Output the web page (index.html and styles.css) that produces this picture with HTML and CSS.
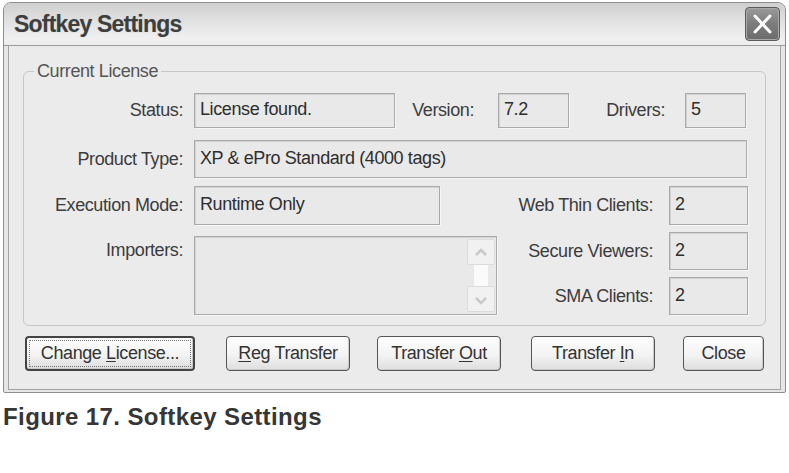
FILE: index.html
```html
<!DOCTYPE html>
<html lang="en">
<head>
	<meta charset="UTF-8">
	<title>Softkey Settings</title>
	<link rel="stylesheet" href="styles.css">
</head>
<body>
<div class="window">
	<div class="titlebar">
		<span class="title">Softkey Settings</span>
		<span class="close-x">
			<svg width="35" height="34" viewBox="0 0 35 34">
				<path d="M10 9 L25 25 M25 9 L10 25" stroke="#fff" stroke-width="3" stroke-linecap="round"/>
			</svg>
		</span>
	</div>
	<div class="client">
		<fieldset class="group">
			<legend>Current License</legend>
			<div class="row row1">
				<span class="lbl">Status:</span>
				<div class="box w-status">License found.</div>
				<span class="lbl-version">Version:</span>
				<div class="box w-ver">7.2</div>
				<span class="lbl-drivers">Drivers:</span>
				<div class="box w-drv">5</div>
			</div>
			<div class="row row2">
				<span class="lbl">Product Type:</span>
				<div class="box w-prod">XP &amp; ePro Standard (4000 tags)</div>
			</div>
			<div class="row row3">
				<span class="lbl">Execution Mode:</span>
				<div class="box w-mode">Runtime Only</div>
				<span class="lbl-right">Web Thin Clients:</span>
				<div class="box w-small">2</div>
			</div>
			<div class="row row4">
				<span class="lbl lbl-imp">Importers:</span>
				<div class="box list">
					<div class="scroll">
						<span class="sbtn">
							<svg width="26" height="26" viewBox="0 0 26 26"><path d="M8 15 L13 10 L18 15" fill="none" stroke="#c9c9c9" stroke-width="2.5"/></svg>
						</span>
						<span class="thumb"></span>
						<span class="sbtn">
							<svg width="26" height="26" viewBox="0 0 26 26"><path d="M8 11 L13 16 L18 11" fill="none" stroke="#c9c9c9" stroke-width="2.5"/></svg>
						</span>
					</div>
				</div>
				<div class="side">
					<div class="side-row">
						<span class="lbl-side">Secure Viewers:</span>
						<div class="box w-small">2</div>
					</div>
					<div class="side-row">
						<span class="lbl-side">SMA Clients:</span>
						<div class="box w-small">2</div>
					</div>
				</div>
			</div>
		</fieldset>
		<div class="buttons">
			<button class="btn btn-default w-change">Change <u>L</u>icense...</button>
			<button class="btn w-reg"><u>R</u>eg Transfer</button>
			<button class="btn w-out">Transfer <u>O</u>ut</button>
			<button class="btn w-in">Transfer <u>I</u>n</button>
			<button class="btn w-close">Close</button>
		</div>
	</div>
</div>
<p class="caption">Figure 17. Softkey Settings</p>
</body>
</html>
```

FILE: styles.css
```css
*{margin: 0;padding: 0;box-sizing: border-box}
body{
	background: #fff;
	font-family: "Liberation Sans", Arial, sans-serif;
	color: #3c3c3c;
}
.window{
	width: 783px;
	height: 391px;
	margin: 2px 0 0 3px;
	border: 1px solid #8e8e8e;
	border-radius: 8px 8px 2px 2px;
	background: #e6e6e6;
	display: flex;
	flex-direction: column;
}
.titlebar{
	height: 43px;
	flex: none;
	display: flex;
	align-items: center;
	justify-content: space-between;
	padding: 0 5px 0 10px;
	border-bottom: 1px solid #9c9c9c;
	border-radius: 7px 7px 0 0;
	background: linear-gradient(#cfcfcf, #dedede 35%, #f0f0f0 85%, #ececec);
}
.title{
	font: bold 23px/26px "Liberation Sans", Arial, sans-serif;
	letter-spacing: -0.8px;
	color: #3e3e3e;
	text-shadow: 0 0 1px #bbb;
}
.close-x{
	width: 35px;
	height: 34px;
	display: block;
	border: 1px solid #5a5a5a;
	border-radius: 4px;
	background: linear-gradient(#9a9a9a, #7c7c7c 50%, #6c6c6c);
	box-shadow: inset 0 0 0 1px #a9a9a9;
}
.close-x svg{display: block;margin: -1px}
.client{
	flex: 1;
	margin: 0 4px 2px;
	border: 1px solid #a3a3a3;
	border-top: none;
	background: #ebebeb;
	font-size: 18px;
	letter-spacing: -0.4px;
}
.group{
	margin: 16px 0 0 14px;
	width: 743px;
	border: 1px solid #c7c7c7;
	border-radius: 6px;
	padding: 13px 0 10px 0;
}
.group legend{
	margin-left: 10px;
	padding: 0 3px;
	line-height: 18px;
	color: #555;
}
.row{
	display: flex;
	align-items: center;
}
.row1{height: 35px;margin-bottom: 12px}
.row2{height: 38px;margin-bottom: 8px}
.row3{height: 39px;margin-bottom: 7px}
.row4{height: 83px;align-items: flex-start}
.lbl{
	width: 159px;
	margin-right: 11px;
	text-align: right;
}
.lbl-imp{padding-top: 8px}
.lbl-version{width: 79px;margin-right: 24px;text-align: right}
.lbl-drivers{width: 96px;margin-right: 20px;text-align: right}
.lbl-right{width: 213px;margin-right: 16px;text-align: right}
.box{
	height: 100%;
	display: flex;
	align-items: center;
	padding: 0 0 2px 5px;
	border: 1px solid #aaa;
	box-shadow: inset 1px 1px 0 #d2d2d2, 1px 1px 0 #f6f6f6;
	background: #e9e9e9;
	color: #2e2e2e;
	white-space: nowrap;
}
.w-status{width: 201px}
.w-ver{width: 71px}
.w-drv{width: 61px}
.w-prod{width: 553px}
.w-mode{width: 246px}
.w-small{width: 79px}
.list{
	width: 303px;
	height: 79px;
	margin-top: 4px;
	padding: 2px 1px 2px 0;
	justify-content: flex-end;
}
.scroll{
	width: 28px;
	height: 100%;
	display: flex;
	flex-direction: column;
	justify-content: space-between;
	align-items: center;
}
.sbtn{
	width: 28px;
	height: 26px;
	border: 1px solid #dcdcdc;
	border-radius: 2px;
	background: #f1f1f1;
}
.sbtn svg{display: block}
.thumb{
	width: 14px;
	flex: 1;
	background: #fafafa;
}
.side{
	display: flex;
	flex-direction: column;
	gap: 7px;
}
.side-row{
	display: flex;
	align-items: center;
	height: 38px;
}
.lbl-side{width: 156px;margin-right: 16px;text-align: right}
.buttons{
	display: flex;
	margin-top: 10px;
	padding-left: 16px;
}
.btn{
	height: 35px;
	border: 1px solid #555;
	border-radius: 4px;
	background: linear-gradient(#fefefe, #f3f3f3 55%, #dedede);
	box-shadow: inset -1px -1px 0 #cacaca;
	font: 18px "Liberation Sans", Arial, sans-serif;
	letter-spacing: -0.4px;
	color: #333;
}
.btn u{text-decoration-thickness: 1px;text-underline-offset: 2px}
.btn-default{
	border: 2px solid #444;
	outline: 1px dotted #777;
	outline-offset: -5px;
}
.w-change{width: 170px}
.w-reg{width: 124px;margin-left: 31px}
.w-out{width: 124px;margin-left: 27px}
.w-in{width: 124px;margin-left: 30px}
.w-close{width: 81px;margin-left: 28px}
.caption{
	margin: 10px 0 0 3px;
	font: bold 24px/28px "Liberation Sans", Arial, sans-serif;
	letter-spacing: 0.4px;
	color: #363636;
}
```
